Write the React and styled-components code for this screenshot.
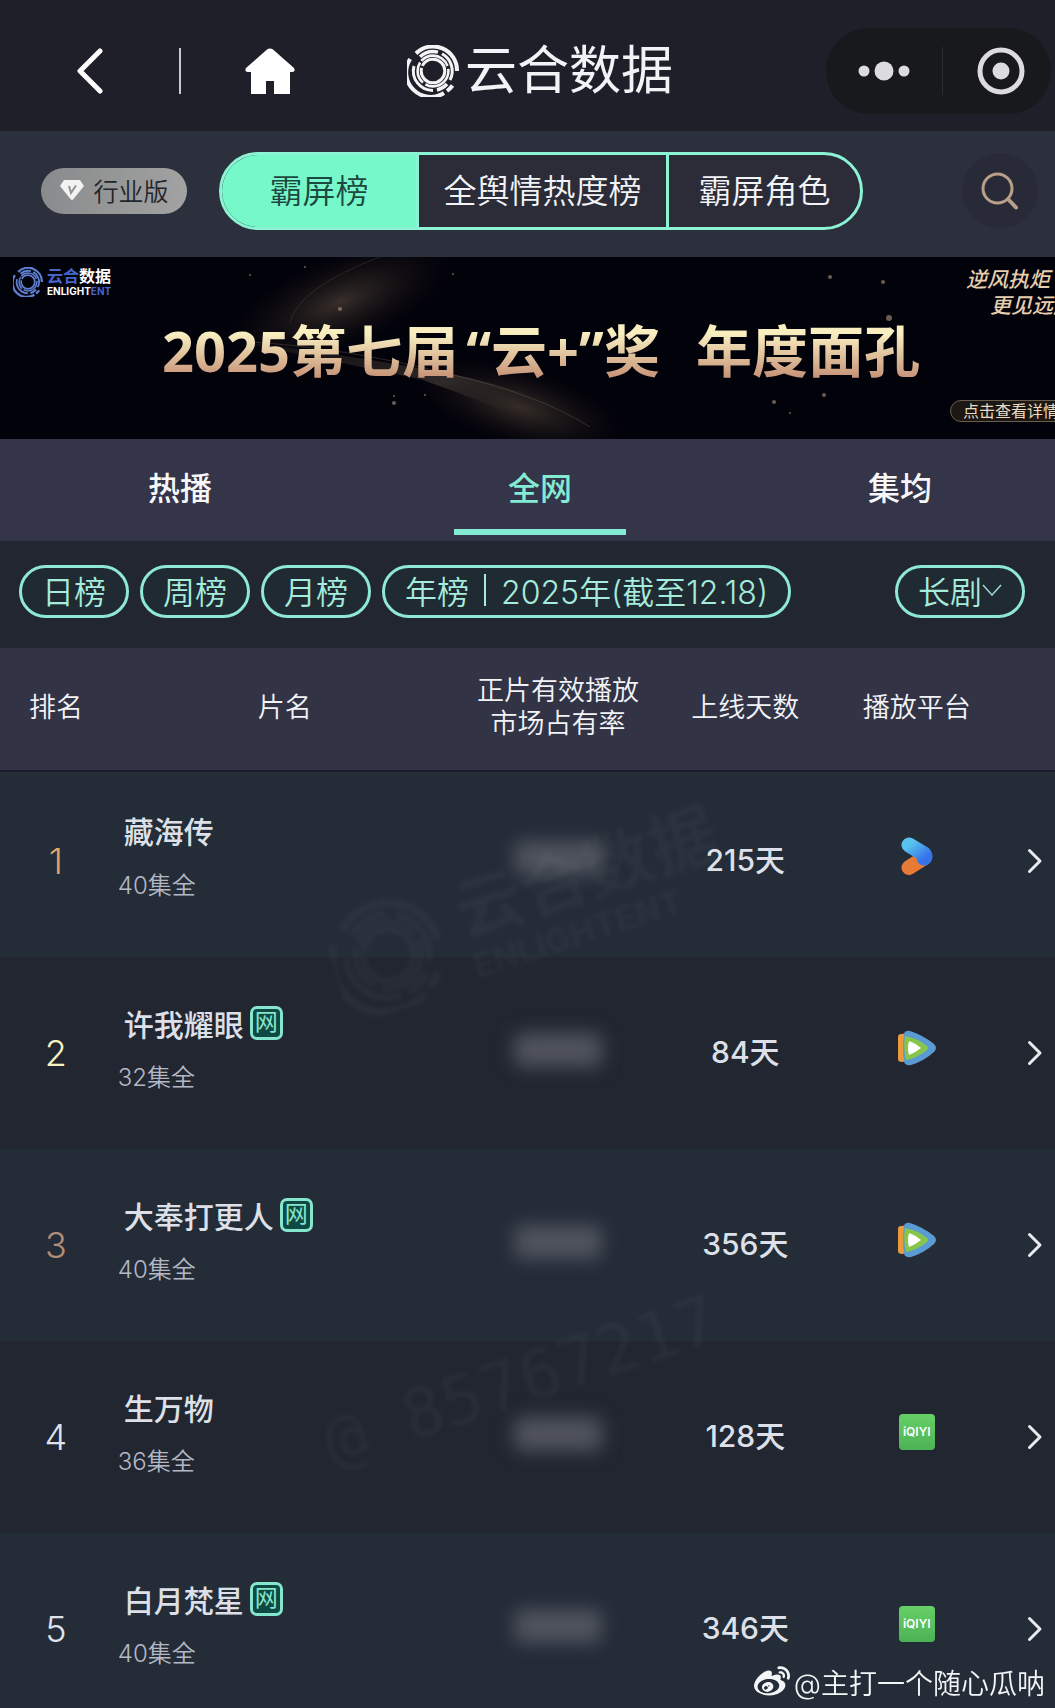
import React from 'react';
import styled, { createGlobalStyle } from 'styled-components';
import { FaWeibo } from 'react-icons/fa';

const shows = [
  { rank: 1, name: '藏海传', episodes: '40集全', days: '215天', platform: 'youku', web: false },
  { rank: 2, name: '许我耀眼', episodes: '32集全', days: '84天', platform: 'tencent', web: true },
  { rank: 3, name: '大奉打更人', episodes: '40集全', days: '356天', platform: 'tencent', web: true },
  { rank: 4, name: '生万物', episodes: '36集全', days: '128天', platform: 'iqiyi', web: false },
  { rank: 5, name: '白月梵星', episodes: '40集全', days: '346天', platform: 'iqiyi', web: true },
];

const rankColors = { 1: '#dfa468', 2: '#f4f2c0', 3: '#b58c78' };

const stars = [
  [830, 20, 2], [883, 25, 2], [889, 61, 3], [774, 145, 2], [824, 138, 2], [790, 156, 1],
  [340, 52, 2], [305, 10, 1], [453, 17, 1], [394, 139, 1], [425, 138, 1], [394, 146, 2], [250, 18, 1],
];

const RingLogo = ({ size, color }) => (
  <svg width={size} height={size} viewBox="0 0 52 52" fill="none" stroke={color} aria-hidden="true">
    <path d="M9 8.5A24 24 0 0 1 50 26" strokeWidth="4" />
    <path d="M3.2 14A24.5 24.5 0 0 0 37 48" strokeWidth="4" />
    <path d="M40 46A24.5 24.5 0 0 0 45.500 40.500" strokeWidth="4" />
    <path d="M13 11.8A19.5 19.5 0 0 1 31 7.2" strokeWidth="3.4" />
    <path d="M35 8.8A19.5 19.5 0 0 1 43 35" strokeWidth="3" />
    <path d="M7 21A19.5 19.5 0 0 0 26 45.5" strokeWidth="3" />
    <path d="M30 45A19.5 19.5 0 0 0 40 39" strokeWidth="3.4" />
    <circle cx="26" cy="26" r="15.4" strokeWidth="2.6" strokeDasharray="32 3 22 2" />
    <circle cx="26" cy="26" r="11.8" strokeWidth="3" strokeDasharray="40 2" />
  </svg>
);

const YoukuIcon = () => (
  <svg width="34" height="38" viewBox="0 0 34 38" role="img" aria-label="优酷">
    <defs>
      <linearGradient id="ykBlue" x1="0" y1="0" x2="1" y2="1">
        <stop offset="0" stopColor="#58c4ee" />
        <stop offset="1" stopColor="#3672ea" />
      </linearGradient>
    </defs>
    <path d="M9 30.5L24 21" stroke="#e87a38" strokeWidth="15" strokeLinecap="round" />
    <path d="M9 8L24 17Q26 19.500 24 21" fill="none" stroke="url(#ykBlue)" strokeWidth="15" strokeLinecap="round" strokeLinejoin="round" />
  </svg>
);

const TencentIcon = () => (
  <svg width="40" height="36" viewBox="0 0 40 36" role="img" aria-label="腾讯视频">
    <path d="M1 7Q1 4 4 4L12 3V31L5 32Q1 32 1 29Z" fill="#ec9a3c" />
    <path d="M7 4Q8 0 13 1Q26 5 37 14Q41 18 37 22Q27 31 14 35Q9 36 7 32Q5 18 7 4Z" fill="#5a9bd4" />
    <path d="M8 6Q20 8 30 16Q32 18 30 20Q20 28 9 30Q6 18 8 6Z" fill="#86c64a" />
    <path d="M12 11Q18 13 24 18Q18 23 12 25Q10 18 12 11Z" fill="#fff" />
  </svg>
);

const DiamondIcon = () => (
  <svg width="26" height="22" viewBox="0 0 26 22" aria-hidden="true">
    <path d="M5 1H21L25 7L14.500 20Q13 22 11.500 20L1 7Z" fill="#f2f2f2" />
    <path d="M10 7L12 14L17 6.500" fill="none" stroke="#929292" strokeWidth="2" />
  </svg>
);

const platforms = {
  youku: <YoukuIcon />,
  tencent: <TencentIcon />,
};

const App = () => (
  <>
    <GlobalStyle />
    <Page>
      <Header>
        <IconButton aria-label="返回">
          <svg width="26" height="46" viewBox="0 0 26 46" fill="none" stroke="#fff" strokeWidth="5" strokeLinecap="round" strokeLinejoin="round">
            <path d="M23 3L3 23L23 43" />
          </svg>
        </IconButton>
        <HeaderDivider />
        <IconButton aria-label="首页">
          <svg width="50" height="46" viewBox="0 0 50 46" fill="#fff">
            <path d="M22 1.500Q25 -0.500 28 1.500L49 20Q51 24 47 24H45V46H29V33H21V46H6V24H3Q-1 24 1 20Z" />
          </svg>
        </IconButton>
        <Brand>
          <RingLogo size={52} color="#f4f4f6" />
          <BrandName>云合数据</BrandName>
        </Brand>
        <Capsule>
          <CapsuleButton aria-label="更多">
            <svg width="52" height="20" viewBox="0 0 52 20" fill="#dcdce0">
              <circle cx="6" cy="10" r="5.500" />
              <circle cx="26" cy="10" r="9.500" />
              <circle cx="46" cy="10" r="5.500" />
            </svg>
          </CapsuleButton>
          <CapsuleDivider />
          <CloseButton aria-label="关闭">
            <svg width="48" height="48" viewBox="0 0 48 48">
              <circle cx="24" cy="24" r="21" fill="none" stroke="#dcdce0" strokeWidth="5" />
              <circle cx="24" cy="24" r="8.500" fill="#dcdce0" />
            </svg>
          </CloseButton>
        </Capsule>
      </Header>

      <Toolbar>
        <Edition><DiamondIcon />行业版</Edition>
        <Segments>
          <Segment $active>霸屏榜</Segment>
          <Segment $wide>全舆情热度榜</Segment>
          <Segment>霸屏角色</Segment>
        </Segments>
        <SearchButton aria-label="搜索">
          <svg width="38" height="38" viewBox="0 0 38 38" fill="none" stroke="#b9a08a" strokeLinecap="round">
            <circle cx="16.500" cy="16.500" r="14.500" strokeWidth="3" />
            <path d="M27 27L35 35.500" strokeWidth="4" />
          </svg>
        </SearchButton>
      </Toolbar>

      <Banner href="#awards">
        <BannerArt viewBox="0 0 1055 182" preserveAspectRatio="xMidYMid slice" aria-hidden="true">
          <defs>
            <radialGradient id="glow">
              <stop offset="0" stopColor="#4a3e34" stopOpacity="0.750" />
              <stop offset="1" stopColor="#1a1412" stopOpacity="0" />
            </radialGradient>
            <linearGradient id="trail" x1="0" y1="0" x2="1" y2="0.500">
              <stop offset="0" stopColor="#3a2f28" stopOpacity="0.200" />
              <stop offset="0.600" stopColor="#4a403a" stopOpacity="0.600" />
              <stop offset="1" stopColor="#1a1614" stopOpacity="0" />
            </linearGradient>
          </defs>
          <ellipse cx="340" cy="45" rx="120" ry="46" fill="url(#glow)" transform="rotate(-22 340 45)" />
          <ellipse cx="520" cy="150" rx="110" ry="40" fill="url(#glow)" transform="rotate(16 520 150)" />
          <path d="M240 85Q330 95 440 115Q560 138 610 180H560Q500 150 420 122Z" fill="url(#trail)" />
          <path d="M290 65Q300 30 380 0" fill="none" stroke="#6a5848" strokeOpacity="0.300" />
          <path d="M250 85Q340 90 450 117Q540 138 590 170" fill="none" stroke="#8a7868" strokeOpacity="0.300" />
          {stars.map(([x, y, r]) => <circle key={`${x}-${y}`} cx={x} cy={y} r={r} fill="#b09a80" fillOpacity="0.600" />)}
        </BannerArt>
        <BannerLogo>
          <RingLogo size={30} color="#5f7fd0" />
          <div>
            <LogoName><em>云合</em>数据</LogoName>
            <LogoLatin>ENLIGHT<em>ENT</em></LogoLatin>
          </div>
        </BannerLogo>
        <Headline>
          2025第七届
          <HeadlineQuote>“云+”奖</HeadlineQuote>
          年度面孔
        </Headline>
        <BannerAside>
          <Slogan>逆风执炬<span>更见远航</span></Slogan>
          <Details>点击查看详情</Details>
        </BannerAside>
      </Banner>

      <Tabs>
        <Tab>热播</Tab>
        <Tab $active>全网</Tab>
        <Tab>集均</Tab>
      </Tabs>

      <Filters>
        <Pill>日榜</Pill>
        <Pill>周榜</Pill>
        <Pill>月榜</Pill>
        <Pill>年榜<PillDivider />2025年(截至12.18)</Pill>
        <TypePill>
          长剧
          <svg width="20" height="12" viewBox="0 0 20 12" fill="none" stroke="#9fd8cf" strokeWidth="1.500">
            <path d="M1 1L10 11L19 1" />
          </svg>
        </TypePill>
      </Filters>

      <List>
        <Table>
          <colgroup>
            <col style={{ width: '10.600%' }} />
            <col style={{ width: '32.800%' }} />
            <col style={{ width: '19%' }} />
            <col style={{ width: '16.500%' }} />
            <col style={{ width: '16%' }} />
            <col />
          </colgroup>
          <thead>
            <tr>
              <Th>排名</Th>
              <Th>片名</Th>
              <Th>正片有效播放<br />市场占有率</Th>
              <Th>上线天数</Th>
              <Th>播放平台</Th>
              <Th aria-label="详情" />
            </tr>
          </thead>
          <tbody>
            {shows.map((show) => (
              <Row key={show.rank}>
                <Rank $color={rankColors[show.rank]}>{show.rank}</Rank>
                <TextCell>
                  <Name>{show.name}{show.web && <WebTag>网</WebTag>}</Name>
                  <Episodes>{show.episodes}</Episodes>
                </TextCell>
                <TextCell><Hidden /></TextCell>
                <Days>{show.days}</Days>
                <TextCell>
                  <Platform>{platforms[show.platform] || <Iqiyi>iQIYI</Iqiyi>}</Platform>
                </TextCell>
                <Cell>
                  <MoreLink href={`#show-${show.rank}`} aria-label={show.name}>
                    <svg width="16" height="26" viewBox="0 0 16 26" fill="none" stroke="#e8eaee" strokeWidth="3" strokeLinecap="round" strokeLinejoin="round">
                      <path d="M2.500 2.500L13 13L2.500 23.500" />
                    </svg>
                  </MoreLink>
                </Cell>
              </Row>
            ))}
          </tbody>
        </Table>
        <BrandMark>
          <RingLogo size={112} color="#fff" />
          <div>云合数据<small>ENLIGHTENT</small></div>
        </BrandMark>
        <UserMark>@ 85767217</UserMark>
      </List>
      <Credit><FaWeibo size={36} />@主打一个随心瓜呐</Credit>
    </Page>
  </>
);

const GlobalStyle = createGlobalStyle`
  * {
    box-sizing: border-box;
  }
  body {
    margin: 0;
    background: #222631;
    color: #f2f3f7;
    font-family: Inter, 'Noto Sans CJK SC', sans-serif;
    font-weight: 350;
  }
  button {
    margin: 0;
    padding: 0;
    border: 0;
    background: none;
    color: inherit;
    font: inherit;
  }
  a {
    color: inherit;
    text-decoration: none;
  }
  svg {
    display: block;
    flex: none;
  }
`;

const Page = styled.div`
  position: relative;
  display: flex;
  flex-direction: column;
  height: 100vh;
  overflow: hidden;
  white-space: nowrap;
`;

const Header = styled.header`
  display: flex;
  align-items: center;
  flex: none;
  height: 131px;
  padding: 10px 4px 0 77px;
  background: #1e1f28;
`;

const IconButton = styled.button`
  flex: none;
`;

const HeaderDivider = styled.span`
  width: 2px;
  height: 46px;
  margin: 0 64px 0 76px;
  background: #c9c9ce;
`;

const Brand = styled.div`
  display: flex;
  align-items: center;
  gap: 6px;
  margin-left: 112px;
`;

const BrandName = styled.h1`
  margin: 0;
  font-size: 52px;
  line-height: 60px;
  font-weight: 400;
`;

const Capsule = styled.div`
  display: flex;
  align-items: center;
  height: 86px;
  margin-left: auto;
  border-radius: 43px;
  background: #18191d;
`;

const CapsuleButton = styled.button`
  display: flex;
  justify-content: center;
  width: 116px;
`;

const CloseButton = styled(CapsuleButton)`
  width: 108px;
  padding-left: 8px;
`;

const CapsuleDivider = styled.span`
  width: 1px;
  height: 48px;
  background: #2c2d32;
`;

const Toolbar = styled.div`
  display: flex;
  align-items: center;
  flex: none;
  height: 126px;
  padding: 0 17px 6px 41px;
  background: #2c303c;
`;

const Edition = styled.button`
  display: flex;
  align-items: center;
  justify-content: center;
  gap: 8px;
  width: 146px;
  height: 46px;
  padding-bottom: 2px;
  border-radius: 23px;
  background: linear-gradient(100deg, #888a8b, #a3a3a3);
  color: #22252b;
  font-size: 25px;
`;

const Segments = styled.div`
  display: flex;
  height: 78px;
  margin-left: 32px;
  border: 3px solid #8df3d5;
  border-radius: 39px;
  background: #2b2c38;
  overflow: hidden;
`;

const Segment = styled.button`
  width: ${(props) => (props.$wide ? '250px' : '194px')};
  padding-bottom: 4px;
  background: ${(props) => (props.$active ? '#77f8ca' : 'transparent')};
  color: ${(props) => (props.$active ? '#1d4840' : '#f2f3f7')};
  font-size: 33px;
  & + & {
    border-left: 3px solid #8df3d5;
  }
`;

const SearchButton = styled.button`
  display: flex;
  align-items: center;
  justify-content: center;
  width: 76px;
  height: 76px;
  margin-left: auto;
  border-radius: 50%;
  background: #282b37;
`;

const Banner = styled.a`
  position: relative;
  display: flex;
  flex: none;
  height: 182px;
  padding: 10px 0 0 13px;
  background: #02020b;
  overflow: hidden;
`;

const BannerArt = styled.svg`
  position: absolute;
  inset: 0;
  width: 100%;
  height: 100%;
`;

const BannerLogo = styled.div`
  position: relative;
  display: flex;
  flex: none;
  gap: 4px;
  width: 149px;
  color: #fff;
  font-weight: 700;
  em {
    color: #4665c8;
    font-style: normal;
  }
`;

const LogoName = styled.div`
  font-size: 16px;
  line-height: 19px;
`;

const LogoLatin = styled.div`
  font-size: 10px;
  line-height: 11px;
`;

const Headline = styled.h2`
  position: relative;
  display: flex;
  flex: none;
  align-self: center;
  margin: 0;
  padding-bottom: 6px;
  background: linear-gradient(#f8eec0 25%, #c8967a 80%);
  background-clip: text;
  color: transparent;
  font-family: 'Noto Sans', 'Noto Sans CJK SC', sans-serif;
  font-size: 56px;
  line-height: 70px;
  font-weight: 700;
`;

const HeadlineQuote = styled.span`
  margin: 0 36px 0 8px;
`;

const BannerAside = styled.div`
  position: relative;
  display: flex;
  flex: none;
  flex-direction: column;
  justify-content: space-between;
  margin-left: auto;
  margin-right: -19px;
  padding-bottom: 17px;
`;

const Slogan = styled.div`
  padding-left: 16px;
  color: #e5cfae;
  font-size: 21px;
  line-height: 26px;
  font-style: italic;
  font-weight: 500;
  span {
    display: block;
    padding-left: 24px;
  }
`;

const Details = styled.div`
  padding: 0 12px;
  border: 1px solid #6b5d4c;
  border-radius: 11px;
  background: #1d1713;
  color: #e8dcc4;
  font-size: 16px;
  line-height: 20px;
  font-weight: 400;
`;

const Tabs = styled.nav`
  display: grid;
  grid-template-columns: repeat(3, 1fr);
  flex: none;
  height: 102px;
  margin-right: -25px;
  background: #343548;
`;

const Tab = styled.button`
  position: relative;
  padding-bottom: 9px;
  color: ${(props) => (props.$active ? '#83ead3' : '#f7f7fa')};
  font-size: 32px;
  font-weight: 500;
  &::after {
    content: '';
    display: ${(props) => (props.$active ? 'block' : 'none')};
    position: absolute;
    bottom: 6px;
    left: 50%;
    width: 172px;
    height: 6px;
    margin-left: -86px;
    background: #83ead3;
  }
`;

const Filters = styled.div`
  display: flex;
  align-items: center;
  gap: 11px;
  flex: none;
  height: 107px;
  padding: 0 30px 6px 19px;
`;

const Pill = styled.button`
  display: flex;
  align-items: center;
  height: 53px;
  padding: 0 20px 4px;
  border: 3px solid #8fe8d6;
  border-radius: 27px;
  background: #1f2a33;
  color: #a5ecdc;
  font-size: 32px;
`;

const PillDivider = styled.span`
  width: 2px;
  height: 32px;
  margin: 0 15px;
  background: #a5ecdc;
`;

const TypePill = styled(Pill)`
  margin-left: auto;
`;

const List = styled.main`
  position: relative;
  flex: 1;
  min-height: 0;
  overflow: hidden auto;
  scrollbar-width: none;
`;

const Table = styled.table`
  width: 100%;
  table-layout: fixed;
  border-collapse: collapse;
`;

const Th = styled.th`
  height: 123px;
  padding: 0 0 4px;
  border-bottom: 2px solid #1b1d2c;
  background: #323446;
  font-size: 27px;
  line-height: 33px;
  font-weight: 350;
`;

const Row = styled.tr`
  height: 192px;
  background: #222631;
  &:nth-child(odd) {
    background: #232c37;
  }
  &:first-child {
    height: 186px;
  }
`;

const Cell = styled.td`
  padding: 0;
  color: #dde0e8;
  ${Row}:first-child & {
    padding-bottom: 8px;
  }
`;

const TextCell = styled(Cell)`
  padding-bottom: 6px;
  ${Row}:first-child & {
    padding-bottom: 14px;
  }
`;

const Rank = styled(Cell)`
  color: ${(props) => props.$color || '#dfe2ea'};
  font-size: 36px;
  text-align: center;
`;

const Name = styled.div`
  display: flex;
  align-items: center;
  gap: 6px;
  height: 55px;
  padding-left: 12px;
  font-size: 30px;
  font-weight: 500;
`;

const WebTag = styled.span`
  width: 33px;
  height: 34px;
  border: 3px solid #86e6cd;
  border-radius: 7px;
  background: #0e4a43;
  color: #86e6cd;
  font-size: 23px;
  line-height: 27px;
  font-weight: 400;
  text-align: center;
`;

const Episodes = styled.div`
  height: 55px;
  padding-left: 6px;
  color: #b3b8c4;
  font-size: 24px;
  line-height: 55px;
`;

const Hidden = styled.div`
  width: 88px;
  height: 34px;
  margin: 0 auto;
  border-radius: 8px;
  background: #50535e;
  filter: blur(9px);
`;

const Days = styled(TextCell)`
  font-size: 30px;
  font-weight: 500;
  text-align: center;
`;

const Platform = styled.div`
  display: flex;
  justify-content: center;
  padding-bottom: 4px;
`;

const Iqiyi = styled.span`
  width: 36px;
  height: 36px;
  border-radius: 4px;
  background: linear-gradient(#66d066, #4cb256);
  color: #fff;
  font-size: 12px;
  line-height: 35px;
  font-weight: 600;
  text-align: center;
`;

const MoreLink = styled.a`
  display: flex;
  justify-content: flex-end;
  padding-right: 12px;
`;

const Mark = styled.div`
  position: absolute;
  color: #fff;
  opacity: 0.03;
  filter: blur(2px);
  transform: rotate(-18deg);
  pointer-events: none;
`;

const BrandMark = styled(Mark)`
  display: flex;
  align-items: center;
  gap: 22px;
  top: 206px;
  left: 325px;
  font-size: 68px;
  line-height: 76px;
  font-weight: 700;
  small {
    display: block;
    font-size: 34px;
    line-height: 36px;
  }
`;

const UserMark = styled(Mark)`
  top: 693px;
  left: 316px;
  font-family: 'DejaVu Sans Mono', monospace;
  font-size: 68px;
  line-height: 80px;
`;

const Credit = styled.footer`
  position: absolute;
  right: 10px;
  bottom: 6px;
  display: flex;
  align-items: center;
  gap: 4px;
  color: #f4f5f7;
  font-size: 28px;
`;

export default App;
